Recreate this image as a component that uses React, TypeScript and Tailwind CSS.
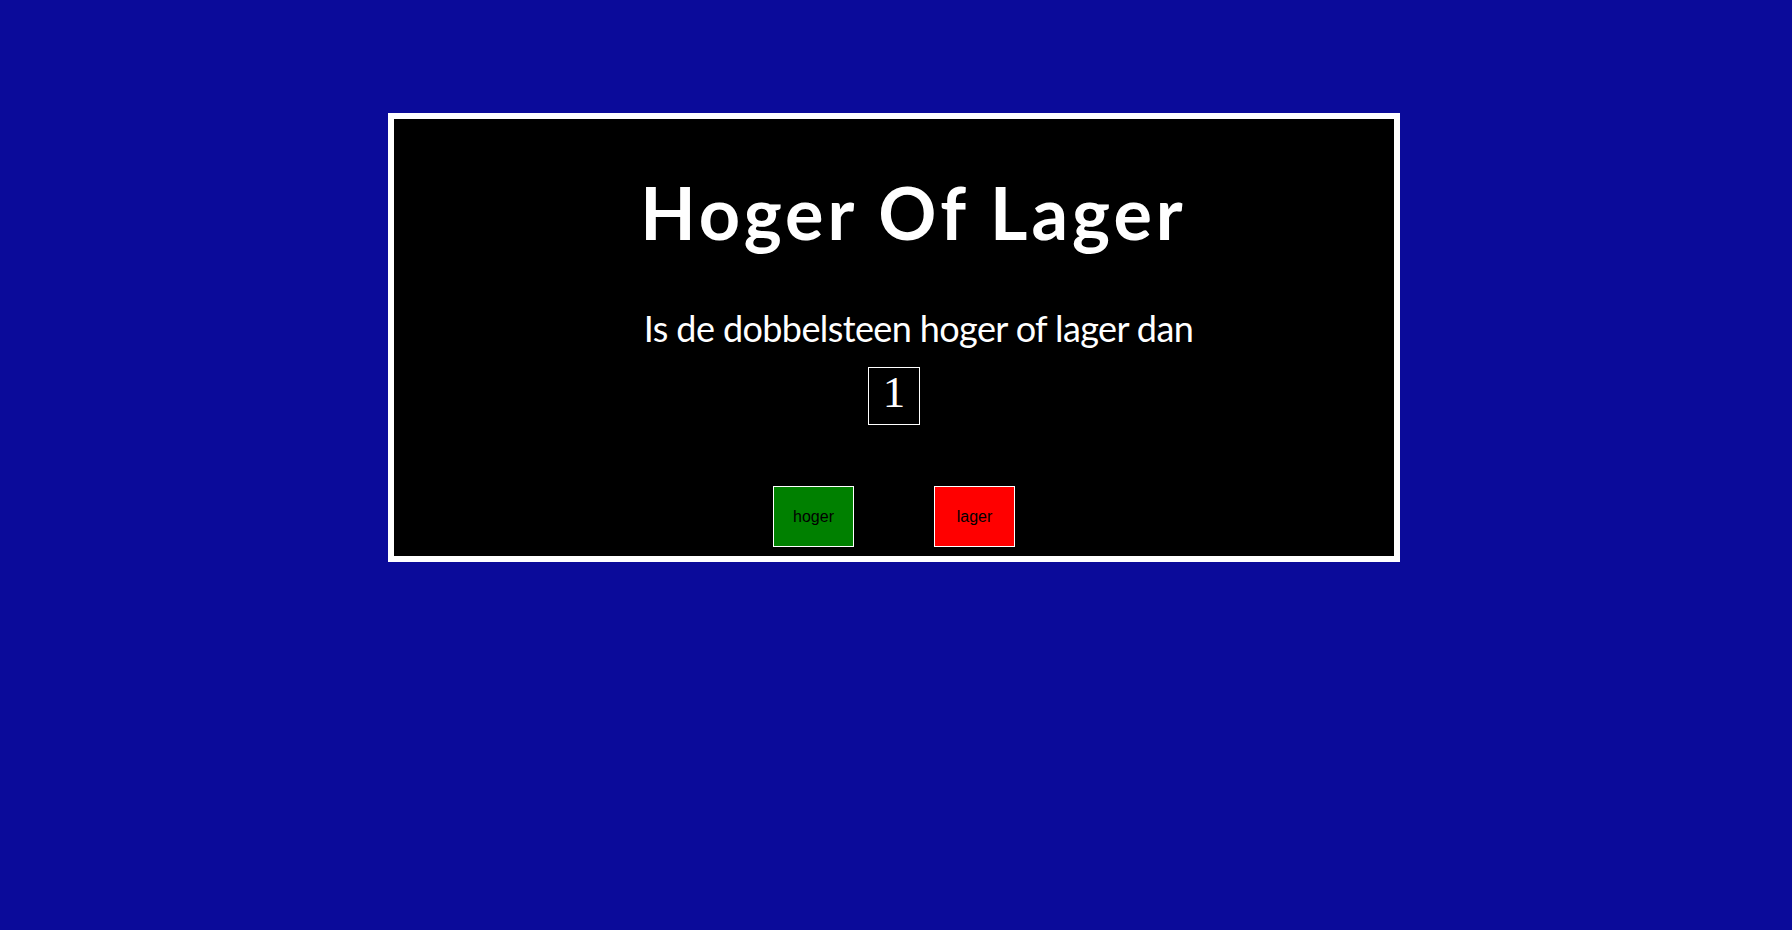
export default function App() {
  return (
    <div className="min-h-[930px] w-full bg-[#0b0b9a] pt-[113px]">
      <div className="ml-[388px] flex h-[449px] w-[1012px] flex-col items-center border-[6px] border-white bg-black">
        <h1 className="mt-[57px] pl-[39px] text-[72px] font-bold leading-none tracking-[4px] text-white [font-family:Lato,'Open_Sans',sans-serif]">
          Hoger Of Lager
        </h1>
        <p className="mt-[62px] pl-[49px] text-[36px] leading-none tracking-[-0.6px] text-white [font-family:Lato,'Open_Sans',sans-serif]">
          Is de dobbelsteen hoger of lager dan
        </p>
        <div className="mt-[21px] flex h-[58px] w-[52px] justify-center border border-white pt-[2px] text-[45px] leading-none text-white [font-family:'Liberation_Serif',serif]">
          1
        </div>
        <div className="mt-[61px] flex gap-[80px]">
          <button className="flex h-[61px] w-[81px] items-center justify-center border border-white bg-[#008000] text-[16px] text-black [font-family:'Liberation_Sans',Arial,sans-serif]">
            hoger
          </button>
          <button className="flex h-[61px] w-[81px] items-center justify-center border border-white bg-[#ff0000] text-[16px] text-black [font-family:'Liberation_Sans',Arial,sans-serif]">
            lager
          </button>
        </div>
      </div>
    </div>
  );
}
